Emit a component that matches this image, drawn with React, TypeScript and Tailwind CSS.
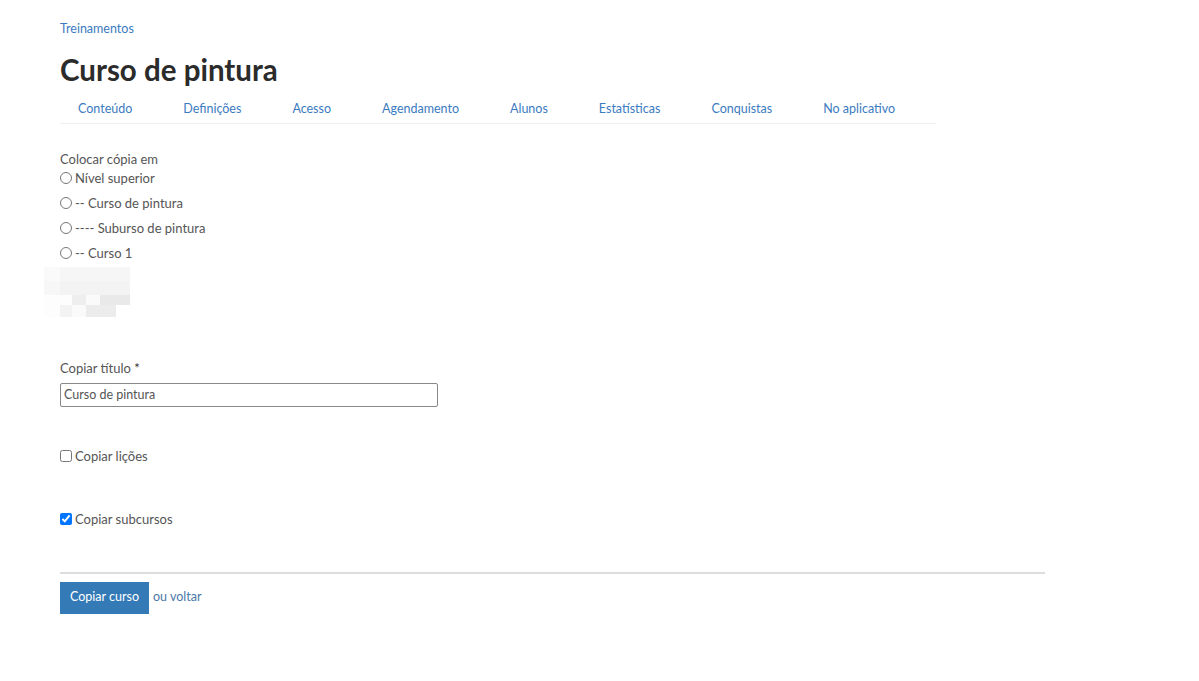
import React from "react";

const tabs = [
  "Conteúdo",
  "Definições",
  "Acesso",
  "Agendamento",
  "Alunos",
  "Estatísticas",
  "Conquistas",
  "No aplicativo",
];

const targets = [
  "Nível superior",
  "-- Curso de pintura",
  "---- Suburso de pintura",
  "-- Curso 1",
];

export default function App() {
  return (
    <div className="min-h-[681px] bg-white pl-[60px] pt-[19px] text-[13px] text-[#555] [font-family:Lato,'Open_Sans',sans-serif]">
      <a className="text-[12.5px] text-[#3b7bbf]" href="#">
        Treinamentos
      </a>
      <h1 className="mt-[14px] text-[29.5px] font-bold leading-[34px] text-[#2b2b2b]">
        Curso de pintura
      </h1>

      {/* Tabs */}
      <div className="mt-[13px] flex w-[876px] border-b border-[#eeeeee] pb-[6px] pl-[18px]">
        {tabs.map((t) => (
          <a
            key={t}
            href="#"
            className="mr-[51px] shrink-0 whitespace-nowrap text-[12.5px] leading-[17px] text-[#3b7bbf]"
          >
            {t}
          </a>
        ))}
      </div>

      {/* Target */}
      <div className="mt-[27px]">
        <div className="leading-[17px]">Colocar cópia em</div>
        <div className="mt-[2px] flex flex-col gap-[8px]">
          {targets.map((t) => (
            <label key={t} className="flex items-center gap-[3px] leading-[17px]">
              <input type="radio" name="target" className="m-0 h-[12px] w-[12px]" />
              <span>{t}</span>
            </label>
          ))}
        </div>
        {/* blurred entries */}
        <div className="mt-[5px] -ml-[16px] flex flex-col">
          <div className="flex h-[14px]">
            <div className="h-full w-[16px] bg-[#fafafa]" />
            <div className="h-full w-[70px] bg-[#f6f6f6]" />
          </div>
          <div className="flex h-[14px]">
            <div className="h-full w-[16px] bg-[#f7f7f7]" />
            <div className="h-full w-[70px] bg-[#f3f3f3]" />
          </div>
          <div className="flex h-[10px]">
            <div className="h-full w-[28px] bg-[#fdfdfd]" />
            <div className="h-full w-[14px] bg-[#eeeeee]" />
            <div className="h-full w-[14px] bg-[#fafafa]" />
            <div className="h-full w-[30px] bg-[#e9e9e9]" />
          </div>
          <div className="flex h-[12px]">
            <div className="h-full w-[16px] bg-[#fdfdfd]" />
            <div className="h-full w-[12px] bg-[#f3f3f3]" />
            <div className="h-full w-[14px] bg-[#fafafa]" />
            <div className="h-full w-[30px] bg-[#ececec]" />
          </div>
        </div>
      </div>

      {/* Title */}
      <div className="mt-[43px]">
        <div className="leading-[17px]">
          Copiar título <span className="text-[#333]">*</span>
        </div>
        <input
          defaultValue="Curso de pintura"
          className="mt-[6px] h-[24px] w-[378px] rounded-[2px] border border-[#888] px-[3px] text-[12.5px] text-[#555] outline-none"
        />
      </div>

      <label className="mt-[41px] flex items-center gap-[3px] leading-[17px]">
        <input type="checkbox" className="m-0 h-[12px] w-[12px]" />
        <span>Copiar lições</span>
      </label>

      <label className="mt-[46px] flex items-center gap-[3px] leading-[17px]">
        <input type="checkbox" defaultChecked className="m-0 h-[12px] w-[12px]" />
        <span>Copiar subcursos</span>
      </label>

      <div className="mt-[44px] w-[985px] border-t-2 border-[#dddddd]" />

      <div className="mt-[8px] flex items-start">
        <button className="h-[32px] w-[89px] bg-[#337ab7] text-[12.5px] text-white">
          Copiar curso
        </button>
        <span className="ml-[4px] mt-[6px] text-[12.5px] text-[#4a78a8]">ou voltar</span>
      </div>
    </div>
  );
}
